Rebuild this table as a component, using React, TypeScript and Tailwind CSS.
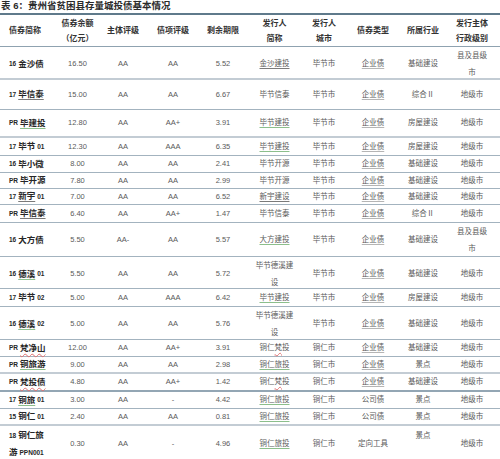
import type { ReactNode } from "react";

// column tracks, tuned so each cell's centre sits where the source table has it
const COLS = "grid grid-cols-[50px_55px_36px_64px_36px_67px_32px_66px_34px_64px]";

const GREEN = "underline decoration-1 underline-offset-[2px] decoration-[#8cbf8c]";
const DARK = "underline decoration-1 underline-offset-[2px] decoration-[#7a7a7a]";
const RED = "underline decoration-wavy decoration-1 underline-offset-[2px] decoration-[#e07070]";
const GRAY = "underline decoration-1 underline-offset-[2px] decoration-[#b5b5b5]";

type Row = {
  h: string;
  line: string;
  pre: string;
  name: ReactNode;
  suf?: string;
  amount: string;
  rating: string;
  issue: string;
  term: string;
  issuer: ReactNode;
  city: string;
  kind: ReactNode;
  industry: ReactNode;
  level: ReactNode;
};

const qe = <span className={GRAY}>企业债</span>;
const county = (
  <span className="leading-[17px]">
    县及县级
    <br />
    市
  </span>
);
const dexi = (
  <span className="leading-[17px]">
    毕节德溪建
    <br />设
  </span>
);

const thin = "border-b border-[#a3b3bf]";
const thick = "border-b-2 border-[#c3ccd4]";

const rows: Row[] = [
  { h: "h-[33px]", line: thick, pre: "16", name: "金沙债", amount: "16.50", rating: "AA", issue: "AA", term: "5.52", issuer: <span className={DARK}>金沙建投</span>, city: "毕节市", kind: qe, industry: "基础建设", level: county },
  { h: "h-[30px]", line: thin, pre: "17", name: <span className={DARK}>毕信泰</span>, amount: "15.00", rating: "AA", issue: "AA", term: "6.67", issuer: "毕节信泰", city: "毕节市", kind: qe, industry: "综合Ⅱ", level: "地级市" },
  { h: "h-[28px]", line: thick, pre: "PR", name: <span className={GREEN}>毕建投</span>, amount: "12.80", rating: "AA", issue: "AA+", term: "3.91", issuer: <span className={GREEN}>毕节建投</span>, city: "毕节市", kind: qe, industry: "房屋建设", level: "地级市" },
  { h: "h-[18px]", line: thin, pre: "17", name: "毕节", suf: "01", amount: "12.30", rating: "AA", issue: "AAA", term: "6.35", issuer: <span className={GREEN}>毕节建投</span>, city: "毕节市", kind: qe, industry: "房屋建设", level: "地级市" },
  { h: "h-[17px]", line: thin, pre: "16", name: "毕小微", amount: "8.00", rating: "AA", issue: "AA", term: "2.41", issuer: "毕节开源", city: "毕节市", kind: qe, industry: "基础建设", level: "地级市" },
  { h: "h-[16px]", line: thin, pre: "PR", name: "毕开源", amount: "7.80", rating: "AA", issue: "AA", term: "2.99", issuer: "毕节开源", city: "毕节市", kind: qe, industry: "基础建设", level: "地级市" },
  { h: "h-[16px]", line: thin, pre: "17", name: <span className={DARK}>新宇</span>, suf: "01", amount: "7.00", rating: "AA", issue: "AA", term: "6.52", issuer: <span className={DARK}>新宇建设</span>, city: "毕节市", kind: qe, industry: "基础建设", level: "地级市" },
  { h: "h-[18px]", line: thin, pre: "PR", name: <span className={DARK}>毕信泰</span>, amount: "6.40", rating: "AA", issue: "AA+", term: "1.47", issuer: "毕节信泰", city: "毕节市", kind: qe, industry: "综合Ⅱ", level: "地级市" },
  { h: "h-[34px]", line: thin, pre: "16", name: "大方债", amount: "5.50", rating: "AA-", issue: "AA", term: "5.57", issuer: <span className={GREEN}>大方建投</span>, city: "毕节市", kind: qe, industry: "基础建设", level: county },
  { h: "h-[32px]", line: thin, pre: "16", name: <span className={GREEN}>德溪</span>, suf: "01", amount: "5.50", rating: "AA", issue: "AA", term: "5.72", issuer: dexi, city: "毕节市", kind: qe, industry: "基础建设", level: "地级市" },
  { h: "h-[18px]", line: thin, pre: "17", name: "毕节", suf: "02", amount: "5.00", rating: "AA", issue: "AAA", term: "6.42", issuer: <span className={GREEN}>毕节建投</span>, city: "毕节市", kind: qe, industry: "房屋建设", level: "地级市" },
  { h: "h-[33px]", line: thin, pre: "16", name: <span className={GREEN}>德溪</span>, suf: "02", amount: "5.00", rating: "AA", issue: "AA", term: "5.76", issuer: dexi, city: "毕节市", kind: qe, industry: "基础建设", level: "地级市" },
  { h: "h-[17px]", line: thin, pre: "PR", name: <span className={RED}>梵净山</span>, amount: "12.00", rating: "AA", issue: "AA+", term: "3.91", issuer: <span>铜仁<span className={RED}>梵</span>投</span>, city: "铜仁市", kind: qe, industry: "基础建设", level: "地级市" },
  { h: "h-[17px]", line: thick, pre: "PR", name: <span className={GREEN}>铜旅游</span>, amount: "9.00", rating: "AA", issue: "AA", term: "2.98", issuer: <span className={GREEN}>铜仁旅投</span>, city: "铜仁市", kind: qe, industry: "景点", level: "地级市" },
  { h: "h-[18px]", line: "border-b-2 border-[#93a6b4]", pre: "PR", name: <span className={RED}>梵投债</span>, amount: "4.80", rating: "AA", issue: "AA+", term: "1.42", issuer: <span>铜仁<span className={RED}>梵</span>投</span>, city: "铜仁市", kind: qe, industry: "基础建设", level: "地级市" },
  { h: "h-[17px]", line: thin, pre: "17", name: <span className={GREEN}>铜旅</span>, suf: "01", amount: "3.00", rating: "AA", issue: "-", term: "4.42", issuer: <span className={GREEN}>铜仁旅投</span>, city: "铜仁市", kind: "公司债", industry: "景点", level: "地级市" },
  { h: "h-[17px]", line: thick, pre: "15", name: "铜仁", suf: "01", amount: "2.40", rating: "AA", issue: "AA", term: "0.81", issuer: <span className={GREEN}>铜仁旅投</span>, city: "铜仁市", kind: "公司债", industry: "景点", level: "地级市" },
];

function Cell({ children, className = "" }: { children: ReactNode; className?: string }) {
  return <div className={`flex items-center justify-center whitespace-nowrap text-center ${className}`}>{children}</div>;
}

function Name({ pre, name, suf }: { pre: string; name: ReactNode; suf?: string }) {
  return (
    <div className="flex items-center whitespace-nowrap pl-[9px] font-bold text-[#262626]">
      <span className="mr-[2px] text-[6.5px]">{pre}</span>
      <span className="text-[8.5px]">{name}</span>
      {suf && <span className="ml-[2px] text-[6.5px]">{suf}</span>}
    </div>
  );
}

export default function App() {
  return (
    <div
      className="h-[459px] w-[500px] overflow-hidden bg-white text-[7.5px] text-[#5a5a5a]"
      style={{ fontFamily: '"Liberation Sans", "Noto Sans CJK SC", sans-serif' }}
    >
      <div className="h-[13px] pl-[1px] text-[9.5px] font-bold leading-[12px] text-[#2a2a2a]">表 6：贵州省贫困县存量城投债基本情况</div>

      <div className={`${COLS} h-[34px] border-y-2 border-t-[#5f7a8b] border-b-[#8fa2b0] border-b-1 text-[8px] font-bold leading-[15px] text-[#333]`}>
        <Cell>债券简称</Cell>
        <Cell>
          债券余额
          <br />
          （亿元）
        </Cell>
        <Cell>主体评级</Cell>
        <Cell>债项评级</Cell>
        <Cell>剩余期限</Cell>
        <Cell>
          发行人
          <br />
          简称
        </Cell>
        <Cell>
          发行人
          <br />
          城市
        </Cell>
        <Cell>债券类型</Cell>
        <Cell>所属行业</Cell>
        <Cell>
          发行主体
          <br />
          行政级别
        </Cell>
      </div>

      {rows.map((r, i) => (
        <div key={i} className={`${COLS} ${r.h} ${r.line}`}>
          <Name pre={r.pre} name={r.name} suf={r.suf} />
          <Cell>{r.amount}</Cell>
          <Cell>{r.rating}</Cell>
          <Cell>{r.issue}</Cell>
          <Cell>{r.term}</Cell>
          <Cell>{r.issuer}</Cell>
          <Cell>{r.city}</Cell>
          <Cell>{r.kind}</Cell>
          <Cell>{r.industry}</Cell>
          <Cell>{r.level}</Cell>
        </div>
      ))}

      <div className={`${COLS} h-[35px]`}>
        <div className="flex flex-col justify-center whitespace-nowrap pl-[9px] font-bold leading-[17px] text-[#262626]">
          <span>
            <span className="mr-[2px] text-[6.5px]">18</span>
            <span className="text-[8.5px]">铜仁旅</span>
          </span>
          <span>
            <span className="text-[8.5px]">游</span>
            <span className="ml-[2px] text-[6.5px]">PPN001</span>
          </span>
        </div>
        <Cell>0.30</Cell>
        <Cell>AA</Cell>
        <Cell>-</Cell>
        <Cell>4.96</Cell>
        <Cell>
          <span className={GREEN}>铜仁旅投</span>
        </Cell>
        <Cell>铜仁市</Cell>
        <Cell>定向工具</Cell>
        <Cell className="leading-[17px]">
          景点
          <br />
          &nbsp;
        </Cell>
        <Cell>地级市</Cell>
      </div>
    </div>
  );
}
